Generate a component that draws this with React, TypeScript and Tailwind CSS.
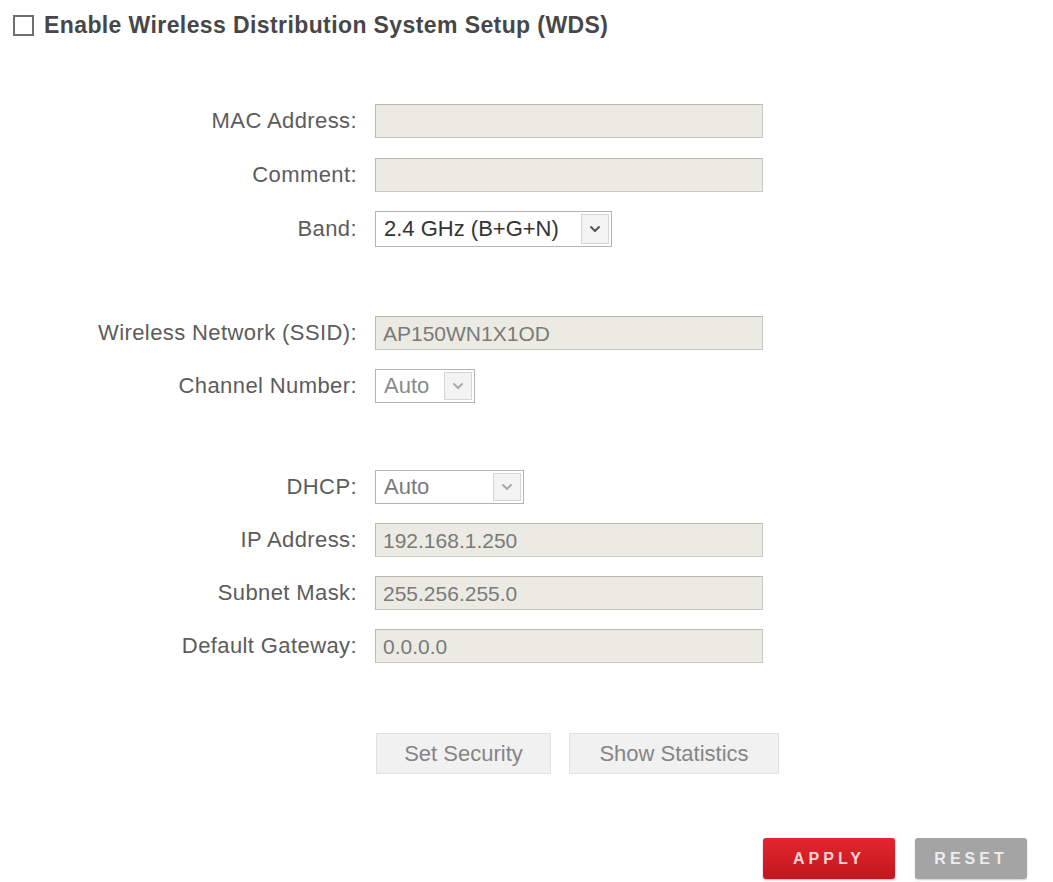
import React from "react";

const font = { fontFamily: '"Liberation Sans", Arial, sans-serif' };

function Label({ children }: { children: React.ReactNode }) {
  return (
    <div className="w-[357px] shrink-0 text-right text-[22px] tracking-[0.4px] text-[#5c5c5c] leading-none">
      {children}
    </div>
  );
}

function TextField({ value }: { value?: string }) {
  return (
    <div className="ml-[18px] w-[388px] h-[34px] flex items-center pl-[7px] bg-[#ebebe4] border border-[#c9c9c4] border-t-[#b9b9b4] border-l-[#bdbdb8] text-[21px] text-[#7a7a7a] leading-none">
      {value}
    </div>
  );
}

function Chevron({ color }: { color: string }) {
  return (
    <svg width="12" height="8" viewBox="0 0 12 8" fill="none">
      <path d="M2 2 L6 6 L10 2" stroke={color} strokeWidth="2" strokeLinecap="round" strokeLinejoin="round" />
    </svg>
  );
}

function Select({
  value,
  width,
  textColor,
  arrowColor,
  height,
}: {
  value: string;
  width: string;
  textColor: string;
  arrowColor: string;
  height: string;
}) {
  return (
    <div className={`ml-[18px] ${width} ${height} flex items-stretch bg-white border border-[#b4b4b4]`}>
      <div className={`flex-1 flex items-center pl-[8px] text-[22px] leading-none ${textColor}`}>{value}</div>
      <div className="w-[28px] m-[2px] flex items-center justify-center bg-[#f3f3f3] border border-[#d6d6d6]">
        <Chevron color={arrowColor} />
      </div>
    </div>
  );
}

export default function App() {
  return (
    <div className="w-[1053px] h-[882px] bg-white overflow-hidden" style={font}>
      {/* Header */}
      <div className="flex items-center pt-[14px] pl-[13px]">
        <div className="w-[21px] h-[21px] border-2 border-[#6f6f6f] bg-white" />
        <div className="ml-[10px] text-[23px] font-bold text-[#474747] tracking-[0.4px] leading-none">
          Enable Wireless Distribution System Setup (WDS)
        </div>
      </div>

      {/* Section 1 */}
      <div className="mt-[67px] flex flex-col gap-[20px]">
        <div className="flex items-center h-[34px]">
          <Label>MAC Address:</Label>
          <TextField />
        </div>
        <div className="flex items-center h-[34px]">
          <Label>Comment:</Label>
          <TextField />
        </div>
        <div className="flex items-center h-[34px]">
          <Label>Band:</Label>
          <Select value="2.4 GHz (B+G+N)" width="w-[237px]" height="h-[36px]" textColor="text-[#333]" arrowColor="#555" />
        </div>
      </div>

      {/* Section 2 */}
      <div className="mt-[70px] flex flex-col gap-[19px]">
        <div className="flex items-center h-[34px]">
          <Label>Wireless Network (SSID):</Label>
          <TextField value="AP150WN1X1OD" />
        </div>
        <div className="flex items-center h-[34px]">
          <Label>Channel Number:</Label>
          <Select value="Auto" width="w-[100px]" height="h-[34px]" textColor="text-[#8a8a8a]" arrowColor="#aaa" />
        </div>
      </div>

      {/* Section 3 */}
      <div className="mt-[67px] flex flex-col gap-[19px]">
        <div className="flex items-center h-[34px]">
          <Label>DHCP:</Label>
          <Select value="Auto" width="w-[149px]" height="h-[34px]" textColor="text-[#7a7a7a]" arrowColor="#aaa" />
        </div>
        <div className="flex items-center h-[34px]">
          <Label>IP Address:</Label>
          <TextField value="192.168.1.250" />
        </div>
        <div className="flex items-center h-[34px]">
          <Label>Subnet Mask:</Label>
          <TextField value="255.256.255.0" />
        </div>
        <div className="flex items-center h-[34px]">
          <Label>Default Gateway:</Label>
          <TextField value="0.0.0.0" />
        </div>
      </div>

      {/* Buttons */}
      <div className="mt-[70px] ml-[376px] flex gap-[18px]">
        <div className="w-[175px] h-[41px] flex items-center justify-center bg-[#f1f1f1] border border-[#e2e2e2] text-[22px] text-[#858585] leading-none">
          Set Security
        </div>
        <div className="w-[210px] h-[41px] flex items-center justify-center bg-[#f1f1f1] border border-[#e2e2e2] text-[22px] text-[#858585] leading-none">
          Show Statistics
        </div>
      </div>

      {/* Apply / Reset */}
      <div className="mt-[64px] ml-[763px] flex gap-[20px]">
        <div className="w-[132px] h-[41px] flex items-center justify-center rounded-[3px] bg-gradient-to-b from-[#e3262e] to-[#c3161d] shadow-[0_1px_2px_rgba(0,0,0,0.3)] text-[16px] font-bold tracking-[4px] text-[#ffd6d6] leading-none">
          APPLY
        </div>
        <div className="w-[112px] h-[41px] flex items-center justify-center rounded-[3px] bg-[#a4a4a4] shadow-[0_1px_2px_rgba(0,0,0,0.2)] text-[16px] font-bold tracking-[4px] text-[#ececec] leading-none">
          RESET
        </div>
      </div>
    </div>
  );
}
